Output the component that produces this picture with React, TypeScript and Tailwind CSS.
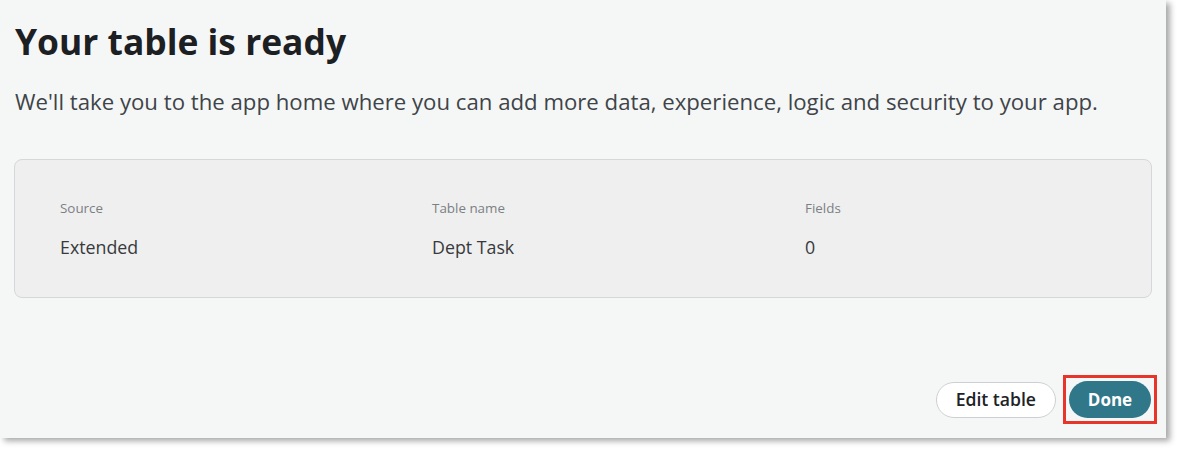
export default function App() {
  return (
    <div className="w-[1184px] h-[452px] bg-white font-['Open_Sans',sans-serif]">
      <div className="w-[1166px] h-[438px] bg-[#f5f7f7] shadow-[4px_3px_6px_rgba(0,0,0,0.35)] flex flex-col">
        <div className="px-[15px] pt-[17px]">
          <h1 className="text-[35.4px] leading-[48px] font-bold text-[#1d2023]">Your table is ready</h1>
          <p className="mt-[22px] text-[22.2px] leading-[30px] text-[#3f4448]">
            We'll take you to the app home where you can add more data, experience, logic and security to your app.
          </p>
        </div>
        <div className="mx-[14px] mt-[42px] h-[139px] rounded-[8px] border border-[#d5d7d8] bg-[#efefef] pl-[45px] pt-[39px]">
          <div className="grid grid-cols-[372px_373px_1fr]">
            {[
              ['Source', 'Extended'],
              ['Table name', 'Dept Task'],
              ['Fields', '0'],
            ].map(([label, value]) => (
              <div key={label}>
                <div className="text-[13.4px] leading-[18px] text-[#7b8084]">{label}</div>
                <div className="mt-[18px] text-[17.8px] leading-[24px] text-[#373a3d]">{value}</div>
              </div>
            ))}
          </div>
        </div>
        <div className="mt-auto mb-[14px] mr-[9px] flex items-center justify-end gap-[7px]">
          <button className="h-[36px] px-[19px] rounded-full border border-[#cdd0d2] bg-white text-[17.6px] font-semibold text-[#202326]">
            Edit table
          </button>
          <span className="border-[3px] border-[#e8352b] p-[3px]">
            <button className="h-[37px] w-[82px] rounded-full bg-[#307889] text-[17px] font-bold text-white block">
              Done
            </button>
          </span>
        </div>
      </div>
    </div>
  );
}
